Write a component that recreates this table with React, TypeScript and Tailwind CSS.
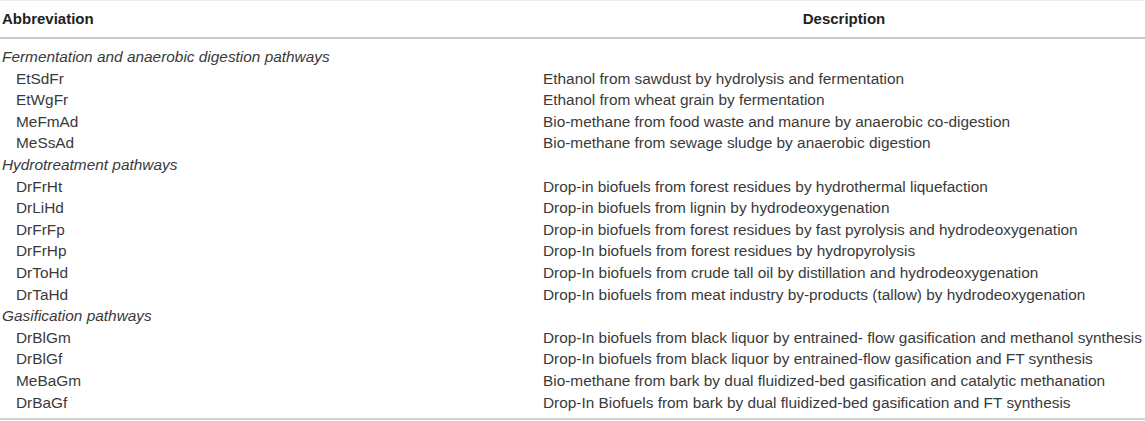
const groups = [
  {
    title: 'Fermentation and anaerobic digestion pathways',
    rows: [
      ['EtSdFr', 'Ethanol from sawdust by hydrolysis and fermentation'],
      ['EtWgFr', 'Ethanol from wheat grain by fermentation'],
      ['MeFmAd', 'Bio-methane from food waste and manure by anaerobic co-digestion'],
      ['MeSsAd', 'Bio-methane from sewage sludge by anaerobic digestion'],
    ],
  },
  {
    title: 'Hydrotreatment pathways',
    rows: [
      ['DrFrHt', 'Drop-in biofuels from forest residues by hydrothermal liquefaction'],
      ['DrLiHd', 'Drop-in biofuels from lignin by hydrodeoxygenation'],
      ['DrFrFp', 'Drop-in biofuels from forest residues by fast pyrolysis and hydrodeoxygenation'],
      ['DrFrHp', 'Drop-In biofuels from forest residues by hydropyrolysis'],
      ['DrToHd', 'Drop-In biofuels from crude tall oil by distillation and hydrodeoxygenation'],
      ['DrTaHd', 'Drop-In biofuels from meat industry by-products (tallow) by hydrodeoxygenation'],
    ],
  },
  {
    title: 'Gasification pathways',
    rows: [
      ['DrBlGm', 'Drop-In biofuels from black liquor by entrained- flow gasification and methanol synthesis'],
      ['DrBlGf', 'Drop-In biofuels from black liquor by entrained-flow gasification and FT synthesis'],
      ['MeBaGm', 'Bio-methane from bark by dual fluidized-bed gasification and catalytic methanation'],
      ['DrBaGf', 'Drop-In Biofuels from bark by dual fluidized-bed gasification and FT synthesis'],
    ],
  },
];

export default function App() {
  return (
    <div
      className="w-[1145px] h-[421px] bg-white text-[#333] overflow-hidden"
      style={{ fontFamily: "'Liberation Sans', Arial, sans-serif" }}
    >
      <div className="border-t border-[#ececec]">
        {/* header */}
        <div className="flex h-[38px] items-center border-b-2 border-[#c9c9c9] text-[15px] font-bold text-[#222]">
          <div className="w-[543px] pl-[2px]">Abbreviation</div>
          <div className="flex-1 text-center">Description</div>
        </div>

        <div className="pt-[7px] pb-[5px] border-b-2 border-[#d2d2d2] text-[15.4px] leading-[21.6px] text-[#3a3a3a]">
          {groups.map((g) => (
            <div key={g.title}>
              <div className="pl-[2px] italic">{g.title}</div>
              {g.rows.map(([abbr, desc]) => (
                <div key={abbr} className="flex">
                  <div className="w-[543px] pl-[16px]">{abbr}</div>
                  <div className="flex-1 whitespace-nowrap">{desc}</div>
                </div>
              ))}
            </div>
          ))}
        </div>
      </div>
    </div>
  );
}
